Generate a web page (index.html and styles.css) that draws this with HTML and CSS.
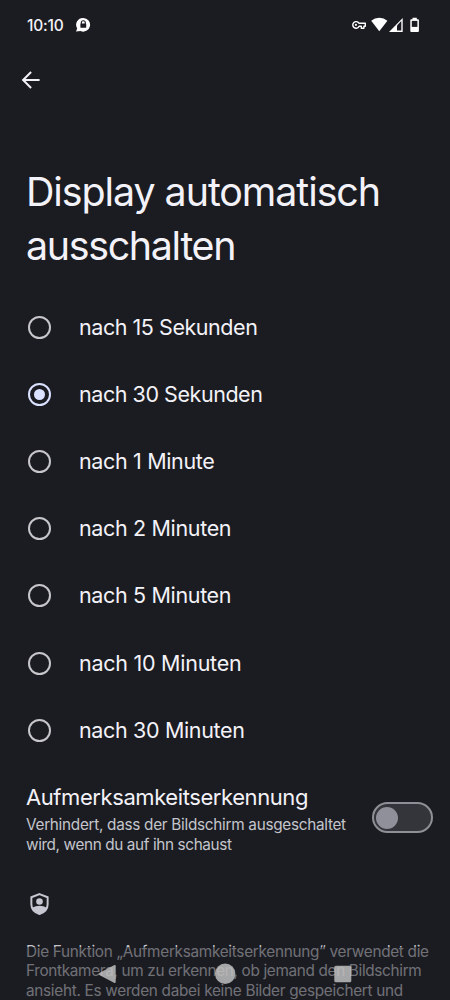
FILE: index.html
```html
<!DOCTYPE html>
<html lang="de">
<head>
    <meta charset="UTF-8">
    <meta name="viewport" content="width=device-width, initial-scale=1.0">
    <title>Display automatisch ausschalten</title>
    <link rel="stylesheet" href="styles.css">
</head>
<body>
    <div class="screen">
        <header class="statusbar">
            <span class="time">10:10</span>
            <svg class="chat" width="16" height="16" viewBox="0 0 16 16">
                <path d="M8.3 1a6.8 6.8 0 1 1-2.8 13L1 14.6l1.2-3.2A6.8 6.8 0 0 1 8.3 1z" fill="#fff"/>
                <path d="M6.3 7V5.7a2 2 0 0 1 4 0V7" fill="none" stroke="#1b1c21" stroke-width="1.1"/>
                <rect x="5.4" y="6.5" width="5.8" height="4.3" rx=".6" fill="#1b1c21"/>
            </svg>
            <div class="icons">
                <svg width="69" height="18" viewBox="351 16 69 18">
                    <path d="M358.9 23.2h6.4v3h-1.4v2h-2.6v-2h-2.2a3.3 3.3 0 1 1-.2-3z" fill="none" stroke="#fff" stroke-width="1.4" stroke-linejoin="round"/>
                    <circle cx="355.9" cy="24.8" r="1.1" fill="#fff"/>
                    <path d="M371.2 20.8a12.4 12.4 0 0 1 16.2 0L379.3 31.2z" fill="#fff"/>
                    <path d="M389 32L402.7 18v14z" fill="#fff"/>
                    <path d="M397 25.5l4.3-4.4v9.5H397z" fill="#1b1c21"/>
                    <path d="M412.5 17.8h4.3v1.4h1.2q.9 0 .9.9v11q0 .9-.9.9h-6.8q-.9 0-.9-.9v-11q0-.9.9-.9h1.3z" fill="#fff"/>
                    <path d="M411.8 20.9h5.6v6h-5.6z" fill="#1b1c21"/>
                </svg>
            </div>
        </header>

        <div class="toolbar">
            <svg width="20" height="20" viewBox="0 0 20 20">
                <path d="M18.6 10H2.3M10.1 2L2.1 10l8 8" fill="none" stroke="#f3f2f8" stroke-width="2"/>
            </svg>
        </div>

        <h1><span class="t1">Display automatisch</span><br><span class="t2">ausschalten</span></h1>

        <div class="options">
            <div class="option"><span class="radio"></span><span class="label seconds">nach 15 Sekunden</span></div>
            <div class="option"><span class="radio checked"></span><span class="label seconds">nach 30 Sekunden</span></div>
            <div class="option"><span class="radio"></span><span class="label">nach 1 Minute</span></div>
            <div class="option"><span class="radio"></span><span class="label">nach 2 Minuten</span></div>
            <div class="option"><span class="radio"></span><span class="label">nach 5 Minuten</span></div>
            <div class="option"><span class="radio"></span><span class="label ten">nach 10 Minuten</span></div>
            <div class="option"><span class="radio"></span><span class="label">nach 30 Minuten</span></div>
        </div>

        <div class="attention">
            <div class="attention-text">
                <h2>Aufmerksamkeitserkennung</h2>
                <p>Verhindert, dass der Bildschirm ausgeschaltet<br><span class="tight">wird, wenn du auf ihn schaust</span></p>
            </div>
            <div class="switch"><span class="thumb"></span></div>
        </div>

        <div class="info">
            <svg width="20" height="24" viewBox="0 0 20 24">
                <path d="M10 2l8.3 3.2v7c0 4.5-3.4 8.4-8.3 10-4.9-1.6-8.3-5.5-8.3-10v-7z" fill="none" stroke="#c6c7d1" stroke-width="2" transform="translate(.7 .2) scale(.98)"/>
                <circle cx="10.5" cy="9.5" r="3.3" fill="#c6c7d1"/>
                <path d="M3 15.8q7.500-4 15 0-2 4.200-7.500 6.200-5.500-2-7.500-6.200z" fill="#c6c7d1"/>
            </svg>
            <p>Die Funktion „Aufmerksamkeitserkennung“ verwendet die<br><span class="tight-2">Frontkamera, um zu erkennen, ob jemand den Bildschirm</span><br>ansieht. Es werden dabei keine Bilder gespeichert und</p>
        </div>

        <nav class="navbar">
            <svg width="450" height="53" viewBox="0 947 450 53">
                <g fill="#c4c4c4" fill-opacity=".82">
                    <path d="M114 965.2q1.700-.8 1.700 1v15.600q0 1.800-1.700 1l-14.700-7.900q-1.500-.9 0-1.800z"/>
                    <circle cx="225.2" cy="973.7" r="10.2"/>
                    <rect x="334.3" y="965.7" width="17" height="16.5" rx="1.5"/>
                </g>
            </svg>
        </nav>
    </div>
</body>
</html>
```

FILE: styles.css
```css
* {
    box-sizing: border-box;
}

body {
    margin: 0;
    background-color: #1b1c21;
    font-family: Inter, Roboto, sans-serif;
    color: #f3f2f8;
}

.screen {
    position: relative;
    width: 450px;
    height: 1000px;
    overflow: hidden;
    white-space: nowrap;
}

.statusbar {
    display: flex;
    align-items: center;
    height: 50px;
    padding: 0 30px 0 27px;
}

.time {
    width: 48px;
    font-size: 15.5px;
    font-weight: 500;
    letter-spacing: -0.2px;
}

.icons {
    margin-left: auto;
    height: 18px;
}

.toolbar {
    height: 60px;
    padding: 20px 21px;
}

h1 {
    margin: 55px 0 0;
    padding-left: 26px;
    font-size: 39.4px;
    font-weight: 400;
    line-height: 54px;
}

.t1 {
    letter-spacing: -1.07px;
}

.t2 {
    letter-spacing: -1.33px;
}

.options {
    padding-top: 21px;
}

.option {
    display: flex;
    align-items: center;
    height: 67.1px;
    padding-left: 28px;
}

.radio {
    display: flex;
    align-items: center;
    justify-content: center;
    width: 23px;
    height: 23px;
    margin-right: 28px;
    border: 2px solid #c6c6cb;
    border-radius: 50%;
}

.checked {
    border-color: #dae2ff;
}

.checked::after {
    content: "";
    width: 11px;
    height: 11px;
    border-radius: 50%;
    background-color: #dae2ff;
}

.label {
    padding-bottom: 1px;
    font-size: 21.5px;
    letter-spacing: -0.35px;
}

.seconds {
    letter-spacing: -0.45px;
}

.ten {
    letter-spacing: -0.26px;
}

.attention {
    display: flex;
    justify-content: space-between;
    align-items: center;
    height: 108px;
    padding: 0 17px 0 26px;
}

.attention-text {
    padding-top: 2px;
}

h2 {
    margin: 0 0 3px;
    font-size: 22px;
    font-weight: 400;
    line-height: 30px;
    letter-spacing: -0.42px;
}

p {
    margin: 0;
    font-size: 15.3px;
    line-height: 19.7px;
    letter-spacing: -0.28px;
    color: #c4c5cc;
}

.tight {
    letter-spacing: -0.37px;
}

.tight-2 {
    letter-spacing: -0.32px;
}

.switch {
    display: flex;
    align-items: center;
    width: 61px;
    height: 31px;
    padding-left: 2px;
    border: 2px solid #8e9097;
    border-radius: 16px;
    background-color: #34353a;
}

.thumb {
    width: 22px;
    height: 22px;
    border-radius: 50%;
    background-color: #8f9099;
}

.info {
    padding: 20px 0 0 26px;
}

.info svg {
    display: block;
    margin: 0 0 26px 3px;
}

.navbar {
    position: absolute;
    left: 0;
    bottom: 0;
    height: 53px;
    background-color: rgba(27, 28, 33, 0.5);
}
```
